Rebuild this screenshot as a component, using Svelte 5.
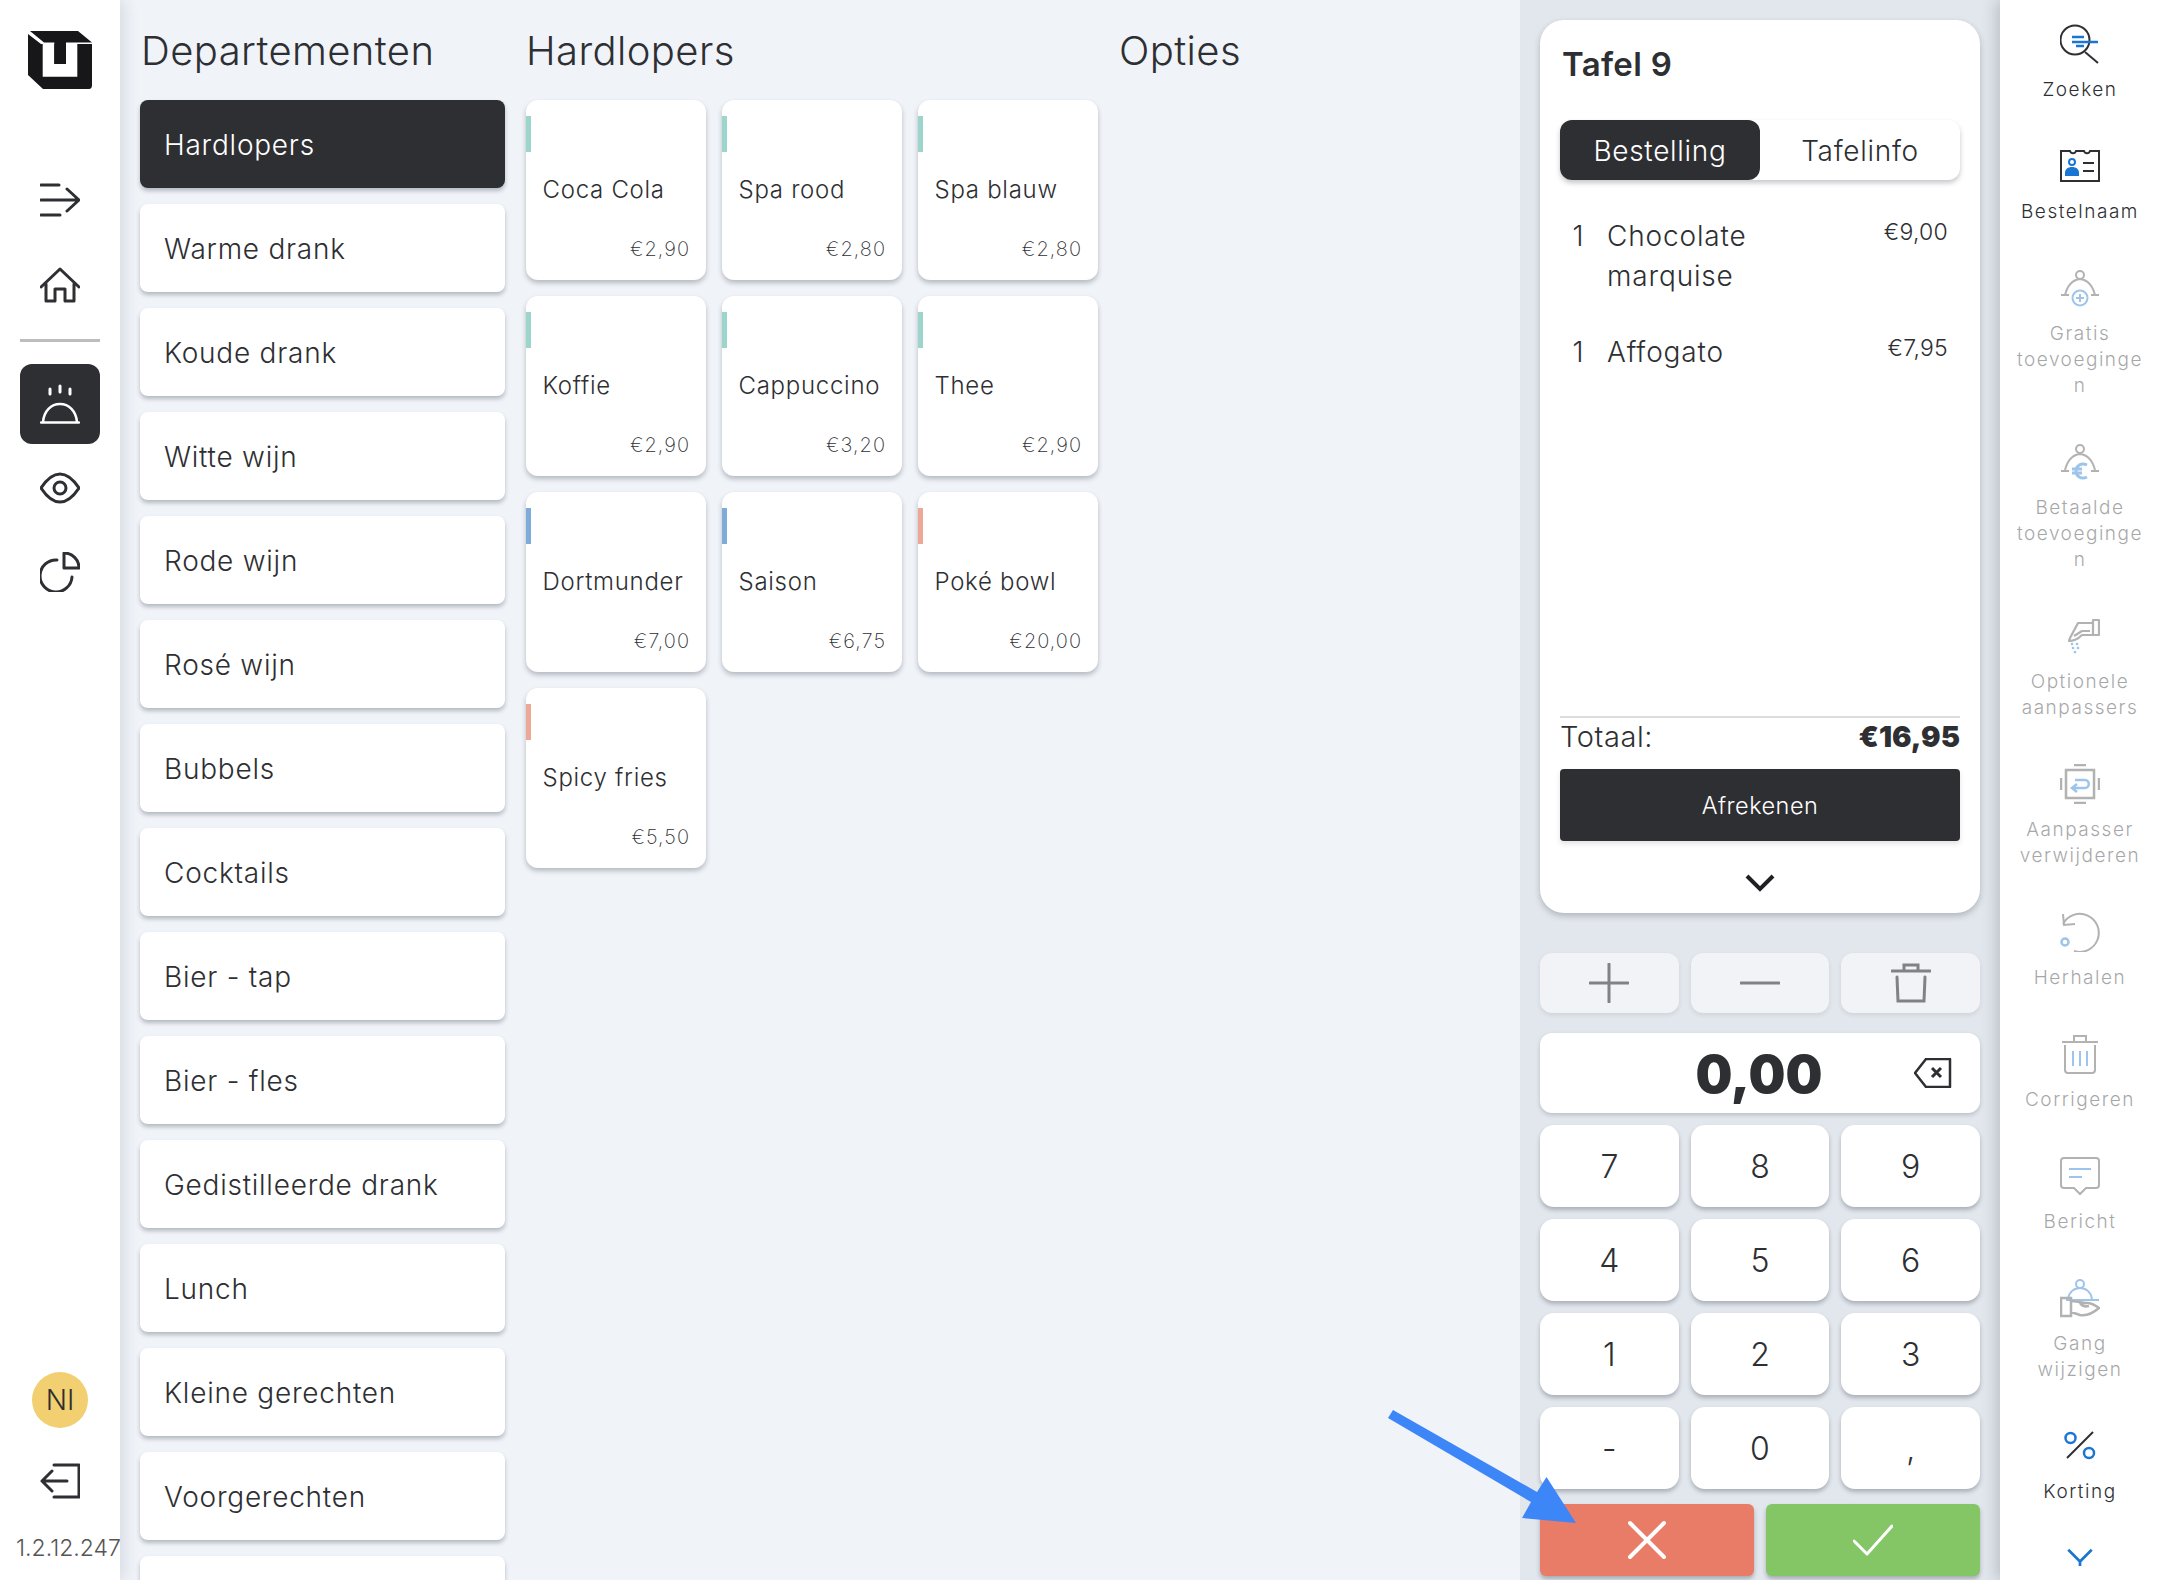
<script>
  const departments = ['Hardlopers','Warme drank','Koude drank','Witte wijn','Rode wijn','Rosé wijn','Bubbels','Cocktails','Bier - tap','Bier - fles','Gedistilleerde drank','Lunch','Kleine gerechten','Voorgerechten',''];
  const products = [
    ['Coca Cola','€2,90','teal'],['Spa rood','€2,80','teal'],['Spa blauw','€2,80','teal'],
    ['Koffie','€2,90','teal'],['Cappuccino','€3,20','teal'],['Thee','€2,90','teal'],
    ['Dortmunder','€7,00','blue'],['Saison','€6,75','blue'],['Poké bowl','€20,00','salmon'],
    ['Spicy fries','€5,50','salmon']
  ];
  const keys = ['7','8','9','4','5','6','1','2','3','-','0',','];
</script>

<div class="app">
  <aside class="left">
    <svg class="logo" viewBox="0 0 64 60" width="64" height="60">
      <path fill="#17171a" d="M2 1H50L64 12.500H16Z"/>
      <path fill="#17171a" d="M0 4 13 14H64V55Q64 59 61 59H15L0 45Z"/>
      <path fill="#fff" fill-rule="evenodd" d="M14.700 14H49.300V46.700H14.700ZM26.300 14V34H38V14Z"/>
      <path fill="#17171a" d="M26.300 12H38V34H26.300Z"/>
    </svg>
    <svg class="ic menu" viewBox="0 0 40 40"><path d="M1 5h18M1 20h37M1 35h19M27 9l12 11-12 11" fill="none" stroke="#2e2f33" stroke-width="3" stroke-linecap="round" stroke-linejoin="round"/></svg>
    <svg class="ic home" viewBox="0 0 40 40"><path d="M1 22 20 4l19 18M6 19v17h9V24h10v12h9V19" fill="none" stroke="#2e2f33" stroke-width="3" stroke-linecap="round" stroke-linejoin="round"/></svg>
    <div class="divider"></div>
    <div class="active-nav">
      <svg viewBox="0 0 40 40" width="40" height="40"><path d="M1 38.500h38M3 38C4 27 11 20 20 20s16 7 17 18" fill="none" stroke="#fff" stroke-width="2.500" stroke-linecap="round"/><path d="M10 5v5M20 2v6M30 5v5" fill="none" stroke="#fff" stroke-width="3" stroke-linecap="round"/></svg>
    </div>
    <svg class="ic eye" viewBox="0 0 40 40"><path d="M1 20C7 11 13 6 20 6s13 5 19 14c-6 9-12 14-19 14S7 29 1 20z" fill="none" stroke="#2e2f33" stroke-width="3" stroke-linejoin="round"/><circle cx="20" cy="20" r="6" fill="none" stroke="#2e2f33" stroke-width="3"/></svg>
    <svg class="ic pie" viewBox="0 0 40 40"><path d="M17 8A16 16 0 1 0 32 25M24 1a15 15 0 0 1 15 15H24z" fill="none" stroke="#2e2f33" stroke-width="3" stroke-linejoin="round" stroke-linecap="round"/></svg>
    <div class="avatar">NI</div>
    <svg class="ic logout" viewBox="0 0 40 40"><path d="M14 4h25v32H14M2 20h25M12 10 2 20l10 10" fill="none" stroke="#2e2f33" stroke-width="3" stroke-linecap="round" stroke-linejoin="round"/></svg>
    <div class="version">1.2.12.247</div>
  </aside>

  <main class="main">
    <section class="dept">
      <h2 class="head">Departementen</h2>
      <div class="dept-list">
        {#each departments as d, i}
          <div class="dept-btn" class:on={i === 0}>{d}</div>
        {/each}
      </div>
    </section>
    <section class="prod">
      <h2 class="head">Hardlopers</h2>
      <div class="prod-grid">
        {#each products as p}
          <div class="card">
            <span class="tag {p[2]}"></span>
            <div class="name">{p[0]}</div>
            <div class="price">{p[1]}</div>
          </div>
        {/each}
      </div>
    </section>
    <section class="opt"><h2 class="head">Opties</h2></section>
  </main>

  <section class="panel">
    <div class="order">
      <div class="title">Tafel 9</div>
      <div class="tabs"><div class="tab on">Bestelling</div><div class="tab">Tafelinfo</div></div>
      <div class="lines">
        <div class="line"><span class="qty">1</span><span class="lname">Chocolate marquise</span><span class="lprice">€9,00</span></div>
        <div class="line"><span class="qty">1</span><span class="lname">Affogato</span><span class="lprice">€7,95</span></div>
      </div>
      <div class="total"><span>Totaal:</span><b>€16,95</b></div>
      <div class="pay">Afrekenen</div>
      <svg class="chev" viewBox="0 0 30 20" width="30" height="20"><path d="M2 3l13 13L28 3" fill="none" stroke="#1f2023" stroke-width="4"/></svg>
    </div>
    <div class="actions">
      <div class="act"><svg viewBox="0 0 40 40" width="40" height="40"><path d="M20 1v38M1 20h38" stroke="#808285" stroke-width="3" stroke-linecap="round"/></svg></div>
      <div class="act"><svg viewBox="0 0 40 40" width="40" height="40"><path d="M1 20h38" stroke="#808285" stroke-width="3" stroke-linecap="round"/></svg></div>
      <div class="act"><svg viewBox="0 0 40 40" width="40" height="40"><path d="M1 8h38M13 8V2h14v6M6 14l1 24h26l1-24" fill="none" stroke="#808285" stroke-width="3" stroke-linecap="round"/></svg></div>
    </div>
    <div class="display">
      <span class="amount">0,00</span>
      <svg class="bksp" viewBox="0 0 38 30" width="38" height="30"><path d="M12 1h24v28H12L1 15z" fill="none" stroke="#2e2f33" stroke-width="2.500" stroke-linejoin="round"/><path d="M18 10l9 9M27 10l-9 9" stroke="#2e2f33" stroke-width="3"/></svg>
    </div>
    <div class="pad">
      {#each keys as k}<div class="key">{k}</div>{/each}
    </div>
    <div class="confirm">
      <div class="cbtn red"><svg viewBox="0 0 40 40" width="40" height="40"><path d="M3 3l34 34M37 3L3 37" stroke="#fff" stroke-width="4" stroke-linecap="round"/></svg></div>
      <div class="cbtn green"><svg viewBox="0 0 40 32" width="40" height="32"><path d="M1 17l13 13L39 2" fill="none" stroke="#fff" stroke-width="3" stroke-linecap="round" stroke-linejoin="round"/></svg></div>
    </div>
  </section>

  <aside class="right">
    <div class="tool">
      <svg viewBox="0 0 40 40"><circle cx="15" cy="16" r="14.500" fill="none" stroke="#2e2f33" stroke-width="2"/><path d="M25 28l13 11" stroke="#2e2f33" stroke-width="2"/><path d="M12 13h12M12 18h26M16 22h8" stroke="#1976d2" stroke-width="2.500"/></svg>
      <span>Zoeken</span>
    </div>
    <div class="tool">
      <svg viewBox="0 0 40 40"><path d="M1 5h9c1 3 5 3 6 0h8c1 3 5 3 6 0h9v30H1z" fill="none" stroke="#2e2f33" stroke-width="2"/><circle cx="12" cy="16" r="3" fill="none" stroke="#1976d2" stroke-width="2"/><path d="M5 30v-3c0-4 3-6 7-6s7 2 7 6v3z" fill="#1976d2"/><path d="M23 17h11M23 25h11" stroke="#2e2f33" stroke-width="2"/></svg>
      <span>Bestelnaam</span>
    </div>
    <div class="tool off">
      <svg viewBox="0 0 40 40"><circle cx="20" cy="7" r="4" fill="none" stroke="#4a4a4d" stroke-width="2"/><path d="M1 27h8M31 27h8M5 27C7 19 12 12 20 11c8 1 13 8 15 16" fill="none" stroke="#4a4a4d" stroke-width="2"/><circle cx="20" cy="30" r="7.500" fill="#fff" stroke="#1976d2" stroke-width="2"/><path d="M20 26v8M16 30h8" stroke="#1976d2" stroke-width="2"/></svg>
      <span>Gratis toevoegingen</span>
    </div>
    <div class="tool off">
      <svg viewBox="0 0 40 40"><circle cx="20" cy="7" r="4" fill="none" stroke="#4a4a4d" stroke-width="2"/><path d="M1 29h8M31 29h8M5 28C7 20 12 13 20 12c8 1 13 8 15 16" fill="none" stroke="#4a4a4d" stroke-width="2"/><path d="M27 23c-6-3-11 1-11 6s5 9 11 6M12 27h10M12 31h10" fill="none" stroke="#1976d2" stroke-width="3"/></svg>
      <span>Betaalde toevoegingen</span>
    </div>
    <div class="tool off">
      <svg viewBox="0 0 40 40"><path d="M33 4h6v15h-6zM33 7H18L10 22l-1 3c5 0 9-2 13-6h11M14 20l8-5h8" fill="none" stroke="#4a4a4d" stroke-width="2.200" stroke-linejoin="round"/><g fill="#1976d2"><circle cx="12" cy="28" r="1.300"/><circle cx="17" cy="28" r="1.300"/><circle cx="13" cy="32" r="1.300"/><circle cx="18" cy="32" r="1.300"/><circle cx="15" cy="36" r="1.300"/></g></svg>
      <span>Optionele aanpassers</span>
    </div>
    <div class="tool off">
      <svg viewBox="0 0 40 40"><rect x="6" y="6" width="28" height="28" fill="none" stroke="#4a4a4d" stroke-width="2.500"/><path d="M14 1h12M14 39h12M1 14v12M39 14v12" stroke="#4a4a4d" stroke-width="2.500"/><path d="M13 24h12c5 0 5-8 0-8H15M17 20l-5 4 5 4" fill="none" stroke="#1976d2" stroke-width="2.500"/></svg>
      <span>Aanpasser verwijderen</span>
    </div>
    <div class="tool off">
      <svg viewBox="0 0 40 40"><path d="M3 12A19 19 0 1 1 14 39M3 2l1 11 11-1" fill="none" stroke="#4a4a4d" stroke-width="2"/><circle cx="5" cy="30" r="3.500" fill="none" stroke="#1976d2" stroke-width="2.500"/></svg>
      <span>Herhalen</span>
    </div>
    <div class="tool off">
      <svg viewBox="0 0 40 40"><path d="M2 8h36M14 8V2h12v6M5 11v25q0 3 3 3h24q3 0 3-3V11" fill="none" stroke="#4a4a4d" stroke-width="2"/><path d="M13 17v15M20 17v15M27 17v15" stroke="#1976d2" stroke-width="2"/></svg>
      <span>Corrigeren</span>
    </div>
    <div class="tool off">
      <svg viewBox="0 0 40 40"><path d="M4 2h32q3 0 3 3v24q0 3-3 3H26l-6 6-6-6H4q-3 0-3-3V5q0-3 3-3z" fill="none" stroke="#4a4a4d" stroke-width="2"/><path d="M9 13h22M9 21h13" stroke="#1976d2" stroke-width="2"/></svg>
      <span>Bericht</span>
    </div>
    <div class="tool off">
      <svg viewBox="0 0 40 40"><circle cx="20" cy="6" r="4" fill="none" stroke="#1976d2" stroke-width="2"/><path d="M8 21C9 14 14 10 20 10s11 4 12 11M6 22h33" fill="none" stroke="#1976d2" stroke-width="2"/><path d="M1 20h10v18H1zM11 23c6 0 10 2 16 2 3 0 8 2 12 5-7 6-14 8-19 7l-9-3M20 25c2 3 5 4 9 3" fill="none" stroke="#4a4a4d" stroke-width="2.500"/></svg>
      <span>Gang wijzigen</span>
    </div>
    <div class="tool">
      <svg viewBox="0 0 40 40"><circle cx="10.500" cy="12" r="5" fill="none" stroke="#1976d2" stroke-width="2.500"/><circle cx="29" cy="27" r="5" fill="none" stroke="#1976d2" stroke-width="2.500"/><path d="M33 6 7 32" stroke="#2e2f33" stroke-width="2"/></svg>
      <span>Korting</span>
    </div>
    <svg class="more" viewBox="0 0 30 20" width="28" height="18"><path d="M2 2l13 13L28 2M15 15v5" fill="none" stroke="#1976d2" stroke-width="3"/></svg>
  </aside>

  <svg class="arrow" viewBox="0 0 2160 1580" width="2160" height="1580">
    <path fill="#3d86f8" d="M1388 1418 1393 1410 1537 1492 1546.500 1477 1576 1523 1522 1518 1531 1502z"/>
  </svg>
</div>

<style>
  :global(body){margin:0;background:#f0f4f9}
  .app{position:relative;display:grid;grid-template-columns:120px 1fr 480px 160px;width:2160px;height:1580px;overflow:hidden;font-family:Inter,"Noto Sans",sans-serif;color:#2e2f33;background:#f0f4f9}
  .left{position:relative;z-index:2;display:flex;flex-direction:column;align-items:center;height:1580px;background:#fff;box-shadow:4px 0 14px rgba(40,50,70,.13)}
  .logo{margin-top:30px;flex:none}
  .ic{width:40px;height:40px;flex:none}
  .menu{margin-top:90px}
  .home{margin-top:45px}
  .divider{width:80px;height:3px;background:#bdbdbd;margin-top:34px;flex:none}
  .active-nav{width:80px;height:80px;border-radius:12px;background:#2e2f33;margin-top:22px;display:flex;align-items:center;justify-content:center;flex:none}
  .eye{margin-top:24px}
  .pie{margin-top:44px}
  .avatar{margin-top:auto;width:56px;height:56px;border-radius:50%;background:#f2cf70;display:flex;align-items:center;justify-content:center;font-size:28px;font-weight:300;flex:none}
  .logout{margin-top:33px}
  .version{margin-top:32px;margin-bottom:17px;align-self:flex-start;margin-left:16px;font-size:23px;line-height:30px;font-weight:300;white-space:nowrap;color:#555}

  .main{display:flex;padding-left:20px;min-width:0;overflow:hidden}
  .head{margin:0;font-size:40px;font-weight:300;line-height:48px;height:100px;padding-top:27px;box-sizing:border-box;letter-spacing:.01em;white-space:nowrap}
  .dept{width:365px;flex:none}
  .dept .head{padding-left:1px}
  .dept-list{display:flex;flex-direction:column;gap:16px}
  .dept-btn{height:88px;flex:none;border-radius:8px;background:#fff;box-shadow:0 3px 4px rgba(30,35,50,.28);display:flex;align-items:center;padding:1px 0 0 24px;box-sizing:border-box;font-size:28px;font-weight:300;letter-spacing:.027em}
  .dept-btn.on{background:#2e2f33;color:#fff}
  .prod{width:574px;margin-left:21px;flex:none}
  .prod-grid{display:grid;grid-template-columns:repeat(3,180px);grid-auto-rows:180px;gap:16px}
  .card{position:relative;background:#fff;border-radius:12px;box-shadow:0 3px 5px rgba(30,35,50,.28);display:flex;flex-direction:column;padding:75px 16px 16px 16.500px;box-sizing:border-box}
  .tag{position:absolute;left:0;top:16px;width:5px;height:36px}
  .teal{background:#9bd5cb}.blue{background:#7fabdb}.salmon{background:#eea898}
  .name{font-size:24px;line-height:30px;font-weight:300;letter-spacing:.03em;white-space:nowrap}
  .price{margin-top:auto;text-align:right;font-size:20px;line-height:30px;font-weight:200;letter-spacing:.05em}
  .opt{margin-left:19px}

  .panel{background:#e2e7ed;padding:20px;display:flex;flex-direction:column;box-sizing:border-box;height:1580px}
  .order{height:893px;flex:none;background:#fff;border-radius:24px;box-shadow:0 3px 6px rgba(30,35,50,.25);display:flex;flex-direction:column;box-sizing:border-box;padding:24px 20px 20px}
  .title{font-size:33px;line-height:40px;font-weight:600;padding-left:2px;letter-spacing:.01em}
  .tabs{display:flex;height:60px;margin-top:36px;border-radius:12px;background:#fff;box-shadow:0 3px 5px rgba(30,35,50,.25);flex:none}
  .tab{width:200px;display:flex;align-items:center;justify-content:center;font-size:28px;font-weight:300;border-radius:12px;letter-spacing:.025em;padding-top:1px;box-sizing:border-box}
  .tab.on{background:#2e2f33;color:#fff}
  .lines{flex:1;margin-top:36px;display:flex;flex-direction:column;gap:36px}
  .line{display:grid;grid-template-columns:36px 1fr 110px;column-gap:12px;padding-right:12px}
  .qty{font-size:28px;line-height:40px;font-weight:300;text-align:center}
  .lname{font-size:28px;line-height:40px;font-weight:300;letter-spacing:.03em;max-width:190px;margin-left:-1px}
  .lprice{font-size:23px;line-height:32px;font-weight:300;text-align:right;letter-spacing:.01em}
  .total{display:flex;justify-content:space-between;align-items:center;border-top:2px solid #dcdcdc;height:43px;font-size:29px;font-weight:300;flex:none;padding:0 0 4px;letter-spacing:.02em;box-sizing:border-box}
  .total b{font-weight:900;letter-spacing:0}
  .pay{margin-top:10px;height:72px;flex:none;background:#2e2f33;color:#fff;border-radius:4px;display:flex;align-items:center;justify-content:center;font-size:23.500px;font-weight:300;letter-spacing:.02em;box-shadow:0 3px 5px rgba(30,35,50,.12)}
  .chev{margin:32px auto 0;flex:none}
  .actions{display:grid;grid-template-columns:repeat(3,1fr);gap:12px;margin-top:40px;flex:none}
  .act{height:60px;border-radius:12px;background:#f1f3f6;box-shadow:0 2px 4px rgba(30,35,50,.1);display:flex;align-items:center;justify-content:center}
  .display{position:relative;height:80px;margin-top:20px;background:#fff;border-radius:12px;box-shadow:0 2px 4px rgba(30,35,50,.2);display:flex;align-items:center;justify-content:center;flex:none}
  .amount{font-size:52px;font-weight:900;margin-left:-2px;letter-spacing:0;position:relative;top:1px}
  .bksp{position:absolute;right:28px;top:25px}
  .pad{display:grid;grid-template-columns:repeat(3,1fr);grid-auto-rows:82px;gap:12px;margin-top:12px;flex:none}
  .key{background:#fff;border-radius:14px;box-shadow:0 3px 4px rgba(30,35,50,.28);display:flex;align-items:center;justify-content:center;font-size:32px;font-weight:300}
  .confirm{display:grid;grid-template-columns:214px 214px;gap:12px;margin-top:15px;flex:none}
  .cbtn{height:72px;border-radius:6px;display:flex;align-items:center;justify-content:center;box-shadow:0 3px 4px rgba(30,35,50,.3)}
  .red{background:#e87c66}.green{background:#84c666}

  .right{position:relative;z-index:2;background:#fff;box-shadow:-4px 0 14px rgba(30,40,50,.2);display:flex;flex-direction:column;align-items:center;padding-top:24px;height:1580px;box-sizing:border-box;overflow:hidden}
  .tool{width:130px;display:flex;flex-direction:column;align-items:center;margin-bottom:43px;flex:none}
  .tool svg{width:40px;height:40px;display:block}
  .tool span{margin-top:13px;font-size:19px;line-height:26px;font-weight:300;letter-spacing:.08em;text-align:center;overflow-wrap:anywhere;width:100%}
  .tool.off svg,.tool.off span{opacity:.42}
  .more{flex:none;margin-top:0}
  .arrow{position:absolute;left:0;top:0;z-index:3;pointer-events:none}
</style>
